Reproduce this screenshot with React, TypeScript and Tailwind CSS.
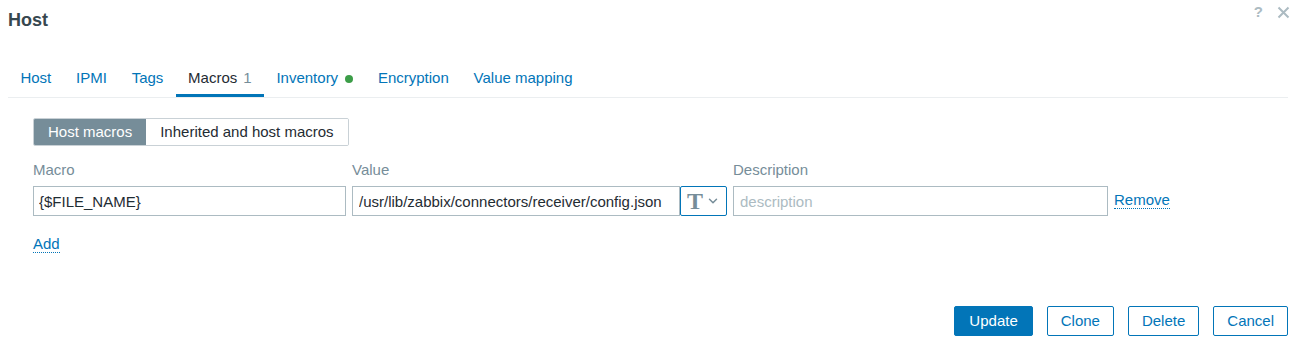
import { ChevronDown } from "lucide-react";

const tabs = ["Host", "IPMI", "Tags", "Macros", "Inventory", "Encryption", "Value mapping"];

export default function App() {
  return (
    <div className="relative h-[342px] w-[1296px] bg-white px-2 font-['Liberation_Sans',Arial,sans-serif] text-[15px] text-[#1f2c33]">
      {/* Header */}
      <div className="flex h-10 items-center">
        <h1 className="text-[18px] font-bold text-[#37474f]">Host</h1>
      </div>
      <div className="absolute right-[6px] top-[1px] flex items-center gap-[14px] text-[#acbbc2]">
        <span className="text-[15px] font-bold">?</span>
        <svg width="13" height="13" viewBox="0 0 13 13" className="mt-[1px]">
          <path d="M1.5 1.5 L11.5 11.5 M11.5 1.5 L1.5 11.5" stroke="currentColor" strokeWidth="2" />
        </svg>
      </div>

      {/* Tabs */}
      <ul className="mt-[21px] flex border-b border-[#ebeef0]">
        {tabs.map((t) => {
          const active = t === "Macros";
          return (
            <li
              key={t}
              className={
                active
                  ? "flex h-9 items-center border-b-[3px] border-[#0275b8] px-[12.4px] pt-[1px] text-[#1f2c33]"
                  : "flex h-9 items-center border-b-[3px] border-transparent px-[12.4px] pt-[1px] text-[#0275b8]"
              }
            >
              {t}
              {active && <span className="ml-[6px] text-[#768d99]">1</span>}
              {t === "Inventory" && <span className="ml-[7px] mt-[2px] h-[8px] w-[8px] rounded-full bg-[#3c9d48]" />}
            </li>
          );
        })}
      </ul>

      {/* Body */}
      <div className="pl-[25px]">
        <div className="mt-5 inline-flex h-7 overflow-hidden rounded-[2px] border border-[#c9d1d6]">
          <button className="bg-[#768d99] px-[14px] text-white">Host macros</button>
          <button className="bg-white px-[14px] text-[#1f2c33]">Inherited and host macros</button>
        </div>

        <div className="mt-[15px] grid grid-cols-[313px_375px_375px_auto] gap-x-[6px]">
          <div className="h-[18px] leading-[18px] text-[#768d99]">Macro</div>
          <div className="h-[18px] leading-[18px] text-[#768d99]">Value</div>
          <div className="h-[18px] leading-[18px] text-[#768d99]">Description</div>
          <div />

          <input
            readOnly
            value="{$FILE_NAME}"
            className="mt-[7px] h-[30px] w-full border border-[#acbbc2] px-[5px] text-[15px] text-[#1f2c33] outline-none"
          />
          <div className="mt-[7px] flex h-[30px]">
            <input
              readOnly
              value="/usr/lib/zabbix/connectors/receiver/config.json"
              className="h-full min-w-0 flex-1 border border-[#acbbc2] px-[6px] text-[15px] text-[#1f2c33] outline-none"
            />
            <div className="flex h-full w-[47px] items-center justify-center gap-[3px] rounded-[2px] border border-[#0275b8] text-[#768d99]">
              <span className="font-['Liberation_Serif',serif] text-[24px] font-bold leading-none">T</span>
              <ChevronDown className="h-[14px] w-[14px]" strokeWidth={2.5} />
            </div>
          </div>
          <input
            readOnly
            placeholder="description"
            className="mt-[7px] h-[30px] w-full border border-[#acbbc2] px-[6px] text-[15px] outline-none placeholder:text-[#acbbc2]"
          />
          <div className="mt-[6px] flex h-[30px] items-center">
            <span className="border-b border-dotted border-[#0275b8] leading-[17px] text-[#0275b8]">Remove</span>
          </div>
        </div>

        <div className="mt-[17px]">
          <span className="border-b border-dotted border-[#0275b8] leading-[17px] text-[#0275b8]">Add</span>
        </div>
      </div>

      {/* Footer buttons */}
      <div className="absolute bottom-[6px] right-2 flex gap-[14px]">
        <button className="h-[30px] rounded-[2px] border border-[#0275b8] bg-[#0275b8] px-[14px] text-white">Update</button>
        <button className="h-[30px] rounded-[2px] border border-[#0275b8] bg-white px-[13px] text-[#0275b8]">Clone</button>
        <button className="h-[30px] rounded-[2px] border border-[#0275b8] bg-white px-[13px] text-[#0275b8]">Delete</button>
        <button className="h-[30px] rounded-[2px] border border-[#0275b8] bg-white px-[13px] text-[#0275b8]">Cancel</button>
      </div>
    </div>
  );
}
